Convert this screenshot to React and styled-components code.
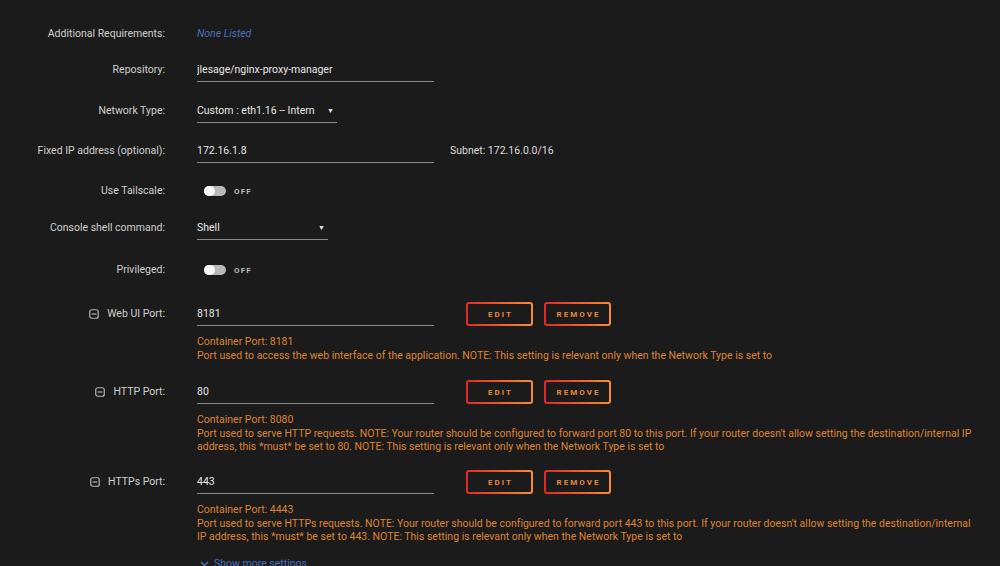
import React from "react";
import styled, { createGlobalStyle } from "styled-components";

const Global = createGlobalStyle`
  html, body { margin: 0; padding: 0; background: #1c1b1b; }
  body {
    font-family: Roboto, "Liberation Sans", sans-serif;
    font-size: 10.5px;
    color: #e2e2e2;
    overflow: hidden;
    font-variant-ligatures: none;
    font-feature-settings: "liga" 0, "calt" 0;
  }
`;

const Form = styled.div`
  display: flex;
  flex-direction: column;
  padding-top: 26px;
`;

const Row = styled.div`
  display: grid;
  grid-template-columns: 165px 1fr;
  column-gap: 32px;
  align-items: start;
  min-height: ${(p) => p.$h}px;
`;

const Label = styled.div`
  display: flex;
  justify-content: flex-end;
  align-items: center;
  gap: 8px;
  line-height: 16px;
  color: #cfcfcf;
`;

const Field = styled.div`
  display: flex;
  flex-direction: column;
  align-items: flex-start;
`;

const Line = styled.div`
  display: flex;
  align-items: flex-start;
  gap: ${(p) => p.$gap || 0}px;
  line-height: 16px;
`;

const Muted = styled.span`
  color: #4b6fbf;
  font-style: italic;
  line-height: 16px;
`;

const Input = styled.input`
  display: block;
  box-sizing: content-box;
  width: ${(p) => p.$w}px;
  height: 16px;
  padding: 0 0 3px;
  margin: 0;
  border: 0;
  border-bottom: 1px solid #8a8a8a;
  background: transparent;
  color: #e6e6e6;
  font: inherit;
  line-height: 16px;
  outline: none;
`;

const Select = styled.div`
  position: relative;
  box-sizing: content-box;
  width: ${(p) => p.$w}px;
  height: 16px;
  padding: 0 0 3px;
  border-bottom: 1px solid #8a8a8a;
  color: #e6e6e6;
  line-height: 16px;
  white-space: nowrap;
  overflow: hidden;
`;

const Caret = styled.span`
  position: absolute;
  right: 3px;
  top: 0;
  font-size: 7px;
  color: #e6e6e6;
`;

const Side = styled.span`
  color: #dcdcdc;
  line-height: 16px;
`;

const ToggleWrap = styled.div`
  display: flex;
  align-items: center;
  gap: 8px;
  height: 16px;
  margin-left: 7px;
`;

const Track = styled.div`
  position: relative;
  width: 22px;
  height: 10px;
  border-radius: 5px;
  background: #b9b9b9;
`;

const Knob = styled.div`
  position: absolute;
  left: 0;
  top: 0;
  width: 11px;
  height: 10px;
  border-radius: 5px;
  background: #f7f7f7;
`;

const ToggleText = styled.span`
  font-size: 8px;
  font-weight: 700;
  letter-spacing: 1.2px;
  color: #bdbdbd;
`;

const Buttons = styled.div`
  display: flex;
  gap: 11px;
  margin-top: -4px;
`;

const Button = styled.button`
  box-sizing: border-box;
  width: ${(p) => p.$w}px;
  height: 24px;
  padding: 0;
  border: 2px solid transparent;
  border-radius: 3px;
  background:
    linear-gradient(#1c1b1b, #1c1b1b) padding-box,
    linear-gradient(90deg, #e22828, #ff8c2f) border-box;
  color: #ea8a3c;
  font-family: Roboto, "Liberation Sans", sans-serif;
  font-size: 8px;
  font-weight: 700;
  letter-spacing: 2px;
  text-indent: 2px;
`;

const Help = styled.div`
  margin-top: 9px;
  width: 782px;
  color: #dd8434;
  line-height: 13.5px;
`;

const More = styled.div`
  display: flex;
  align-items: center;
  gap: 5px;
  margin-left: 3px;
  color: #4b6fbf;
  line-height: 16px;
`;

const MinusSquare = () => (
  <svg width="10" height="10" viewBox="0 0 10 10" aria-hidden="true">
    <rect x="0.75" y="0.75" width="8.5" height="8.5" rx="2" fill="none" stroke="#b5b5b5" strokeWidth="1.2" />
    <line x1="2.6" y1="5" x2="7.4" y2="5" stroke="#b5b5b5" strokeWidth="1.2" />
  </svg>
);

const Chevron = () => (
  <svg width="9" height="6" viewBox="0 0 9 6" aria-hidden="true">
    <path d="M1 1l3.5 3.5L8 1" fill="none" stroke="#4b6fbf" strokeWidth="1.5" />
  </svg>
);

const Toggle = () => (
  <ToggleWrap>
    <Track>
      <Knob />
    </Track>
    <ToggleText>OFF</ToggleText>
  </ToggleWrap>
);

const ports = [
  {
    label: "Web UI Port:",
    value: "8181",
    container: "8181",
    h: 78,
    help: "Port used to access the web interface of the application. NOTE: This setting is relevant only when the Network Type is set to",
  },
  {
    label: "HTTP Port:",
    value: "80",
    container: "8080",
    h: 90,
    help: "Port used to serve HTTP requests. NOTE: Your router should be configured to forward port 80 to this port. If your router doesn't allow setting the destination/internal IP address, this *must* be set to 80. NOTE: This setting is relevant only when the Network Type is set to",
  },
  {
    label: "HTTPs Port:",
    value: "443",
    container: "4443",
    h: 82,
    help: "Port used to serve HTTPs requests. NOTE: Your router should be configured to forward port 443 to this port. If your router doesn't allow setting the destination/internal IP address, this *must* be set to 443. NOTE: This setting is relevant only when the Network Type is set to",
  },
];

export default function App() {
  return (
    <>
      <Global />
      <Form>
        <Row $h={36}>
          <Label>Additional Requirements:</Label>
          <Field>
            <Muted>None Listed</Muted>
          </Field>
        </Row>
        <Row $h={41}>
          <Label>Repository:</Label>
          <Field>
            <Input $w={237} value="jlesage/nginx-proxy-manager" readOnly />
          </Field>
        </Row>
        <Row $h={40}>
          <Label>Network Type:</Label>
          <Field>
            <Select $w={140}>
              Custom : eth1.16 -- Intern<Caret>▼</Caret>
            </Select>
          </Field>
        </Row>
        <Row $h={40}>
          <Label>Fixed IP address (optional):</Label>
          <Field>
            <Line $gap={16}>
              <Input $w={237} value="172.16.1.8" readOnly />
              <Side>Subnet: 172.16.0.0/16</Side>
            </Line>
          </Field>
        </Row>
        <Row $h={37}>
          <Label>Use Tailscale:</Label>
          <Field>
            <Toggle />
          </Field>
        </Row>
        <Row $h={42}>
          <Label>Console shell command:</Label>
          <Field>
            <Select $w={131}>
              Shell<Caret>▼</Caret>
            </Select>
          </Field>
        </Row>
        <Row $h={44}>
          <Label>Privileged:</Label>
          <Field>
            <Toggle />
          </Field>
        </Row>
        {ports.map((p) => (
          <Row key={p.label} $h={p.h}>
            <Label>
              <MinusSquare />
              {p.label}
            </Label>
            <Field>
              <Line $gap={32}>
                <Input $w={237} value={p.value} readOnly />
                <Buttons>
                  <Button $w={67}>EDIT</Button>
                  <Button $w={67}>REMOVE</Button>
                </Buttons>
              </Line>
              <Help>
                Container Port: {p.container}
                <br />
                {p.help}
              </Help>
            </Field>
          </Row>
        ))}
        <Row $h={20}>
          <Label />
          <Field>
            <More>
              <Chevron />
              Show more settings
            </More>
          </Field>
        </Row>
      </Form>
    </>
  );
}
